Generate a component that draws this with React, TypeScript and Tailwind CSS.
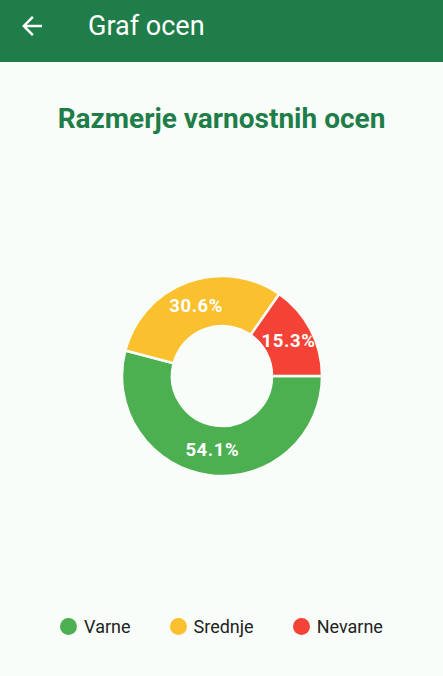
const data = [
  { label: "Varne", value: 54.1, color: "#4caf50" },
  { label: "Srednje", value: 30.6, color: "#fbc02d" },
  { label: "Nevarne", value: 15.3, color: "#f44336" },
];

const CX = 110;
const CY = 110;
const R_OUT = 100;
const R_IN = 50;

const pt = (r: number, deg: number) => {
  const a = (deg * Math.PI) / 180;
  return [CX + r * Math.cos(a), CY + r * Math.sin(a)];
};

const slicePath = (start: number, end: number) => {
  const [x1, y1] = pt(R_OUT, start);
  const [x2, y2] = pt(R_OUT, end);
  const [x3, y3] = pt(R_IN, end);
  const [x4, y4] = pt(R_IN, start);
  const large = end - start > 180 ? 1 : 0;
  return `M${x1} ${y1} A${R_OUT} ${R_OUT} 0 ${large} 1 ${x2} ${y2} L${x3} ${y3} A${R_IN} ${R_IN} 0 ${large} 0 ${x4} ${y4} Z`;
};

const Donut = () => {
  let angle = 0;
  const total = data.reduce((s, d) => s + d.value, 0);
  const slices = data.map((d) => {
    const sweep = (d.value / total) * 360;
    const start = angle;
    angle += sweep;
    const [lx, ly] = pt(75, start + sweep / 2);
    return { ...d, start, end: angle, lx, ly };
  });
  return (
    <svg width="220" height="220" viewBox="0 0 220 220">
      {slices.map((s) => (
        <path key={s.label} d={slicePath(s.start, s.end)} fill={s.color} stroke="#f8fdf9" strokeWidth="2.5" />
      ))}
      {slices.map((s) => (
        <text
          key={s.label + "t"}
          x={s.lx}
          y={s.ly}
          fill="#ffffff"
          fontSize="18.5"
          fontWeight="700"
          textAnchor="middle"
          dominantBaseline="central"
          style={{ fontFamily: "Roboto, sans-serif", letterSpacing: "0.6px" }}
        >
          {s.value}%
        </text>
      ))}
    </svg>
  );
};

const App = () => {
  return (
    <div className="flex flex-col w-[443px] h-[676px] bg-[#f8fdf9] font-['Roboto',sans-serif]">
      <div className="flex flex-row items-center h-[62px] pb-[10px] bg-[#1e7d48] text-white shrink-0">
        <svg className="ml-[17px] w-[30px] h-[30px]" viewBox="0 0 24 24" fill="currentColor">
          <path d="M20 11H7.83l5.59-5.59L12 4l-8 8 8 8 1.41-1.41L7.83 13H20v-2z" />
        </svg>
        <div className="ml-[41px] text-[27px] leading-[32px]">Graf ocen</div>
      </div>
      <div className="mt-[40px] text-center text-[28px] leading-[34px] font-bold text-[#1e7d48]">
        Razmerje varnostnih ocen
      </div>
      <div className="flex justify-center mt-[130px]">
        <Donut />
      </div>
      <div className="flex flex-row justify-center items-center gap-[39px] mt-[127px] text-[18px] text-[#222222]">
        {data.map((d) => (
          <div key={d.label} className="flex flex-row items-center gap-[7px]">
            <div className="w-[17px] h-[17px] rounded-full" style={{ backgroundColor: d.color }} />
            <span>{d.label}</span>
          </div>
        ))}
      </div>
    </div>
  );
};

export default App;
